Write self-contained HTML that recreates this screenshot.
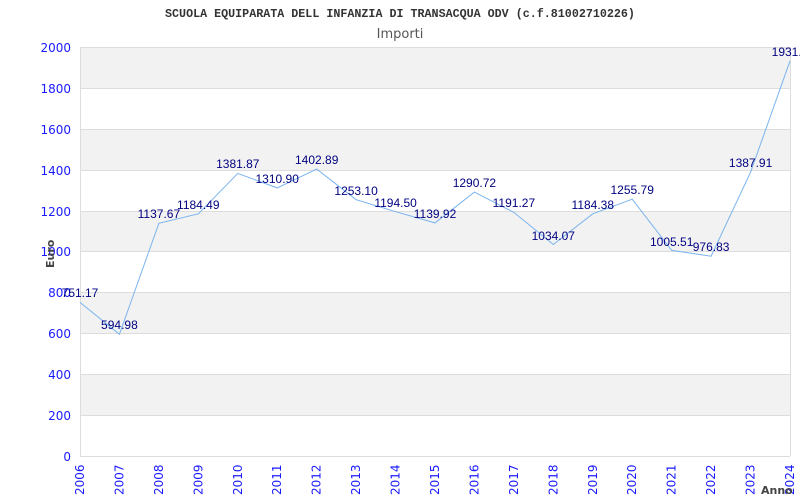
<!DOCTYPE html>
<html><head><meta charset="utf-8"><style>
html,body{margin:0;padding:0;background:#fff;width:800px;height:500px;overflow:hidden}
</style></head><body>
<svg width="800" height="500" xmlns="http://www.w3.org/2000/svg">
<text x="400" y="17" text-anchor="middle" font-family="Liberation Mono, DejaVu Sans Mono, monospace" font-weight="bold" font-size="11.7" fill="#333">SCUOLA EQUIPARATA DELL INFANZIA DI TRANSACQUA ODV (c.f.81002710226)</text>
<text x="400" y="38" text-anchor="middle" font-family="DejaVu Sans, sans-serif" font-size="13" fill="#555">Importi</text>
<g fill="#f2f2f2">
<rect x="80" y="47" width="710" height="41"/>
<rect x="80" y="129" width="710" height="41"/>
<rect x="80" y="211" width="710" height="40"/>
<rect x="80" y="292" width="710" height="41"/>
<rect x="80" y="374" width="710" height="41"/>
</g>
<g stroke="#ddd" stroke-width="1">
<line x1="80" y1="47.5" x2="790" y2="47.5"/>
<line x1="80" y1="88.5" x2="790" y2="88.5"/>
<line x1="80" y1="129.5" x2="790" y2="129.5"/>
<line x1="80" y1="170.5" x2="790" y2="170.5"/>
<line x1="80" y1="211.5" x2="790" y2="211.5"/>
<line x1="80" y1="251.5" x2="790" y2="251.5"/>
<line x1="80" y1="292.5" x2="790" y2="292.5"/>
<line x1="80" y1="333.5" x2="790" y2="333.5"/>
<line x1="80" y1="374.5" x2="790" y2="374.5"/>
<line x1="80" y1="415.5" x2="790" y2="415.5"/>
<line x1="80" y1="456.5" x2="790" y2="456.5"/>
<line x1="80.5" y1="47" x2="80.5" y2="456"/>
<line x1="790.5" y1="47" x2="790.5" y2="456"/>
</g>
<g font-family="DejaVu Sans, sans-serif" font-size="12" fill="#1a1aff" text-anchor="end">
<text x="71" y="52">2000</text><text x="71" y="93">1800</text><text x="71" y="134">1600</text>
<text x="71" y="175">1400</text><text x="71" y="216">1200</text><text x="71" y="256">1000</text>
<text x="71" y="297">800</text><text x="71" y="338">600</text><text x="71" y="379">400</text>
<text x="71" y="420">200</text><text x="71" y="461">0</text>
</g>
<g font-family="DejaVu Sans, sans-serif" font-size="12" fill="#1a1aff">
<text transform="translate(84,495) rotate(-90)">2006</text>
<text transform="translate(123.4,495) rotate(-90)">2007</text>
<text transform="translate(162.9,495) rotate(-90)">2008</text>
<text transform="translate(202.3,495) rotate(-90)">2009</text>
<text transform="translate(241.8,495) rotate(-90)">2010</text>
<text transform="translate(281.2,495) rotate(-90)">2011</text>
<text transform="translate(320.7,495) rotate(-90)">2012</text>
<text transform="translate(360.1,495) rotate(-90)">2013</text>
<text transform="translate(399.6,495) rotate(-90)">2014</text>
<text transform="translate(439,495) rotate(-90)">2015</text>
<text transform="translate(478.4,495) rotate(-90)">2016</text>
<text transform="translate(517.9,495) rotate(-90)">2017</text>
<text transform="translate(557.3,495) rotate(-90)">2018</text>
<text transform="translate(596.8,495) rotate(-90)">2019</text>
<text transform="translate(636.2,495) rotate(-90)">2020</text>
<text transform="translate(675.7,495) rotate(-90)">2021</text>
<text transform="translate(715.1,495) rotate(-90)">2022</text>
<text transform="translate(754.6,495) rotate(-90)">2023</text>
<text transform="translate(794,495) rotate(-90)">2024</text>
</g>
<text x="761" y="494" font-family="DejaVu Sans, sans-serif" font-weight="bold" font-size="11" fill="#444">Anno</text>
<text transform="translate(54,268) rotate(-90)" font-family="DejaVu Sans, sans-serif" font-weight="bold" font-size="11" fill="#444">Euro</text>
<polyline fill="none" stroke="#7ab4ee" stroke-width="1" points="80,302.4 119.4,334.3 158.9,223.3 198.3,213.8 237.8,173.4 277.2,187.9 316.7,169.1 356.1,199.7 395.6,211.7 435,222.9 474.4,192.1 513.9,212.4 553.3,244.5 592.8,213.8 632.2,199.2 671.7,250.4 711.1,256.2 750.6,172.2 790,60.9"/>
<g font-family="Liberation Sans, sans-serif" font-size="12" fill="#000080" text-anchor="middle">
<text x="80" y="297">751.17</text>
<text x="119.4" y="329">594.98</text>
<text x="158.9" y="218">1137.67</text>
<text x="198.3" y="209">1184.49</text>
<text x="237.8" y="168">1381.87</text>
<text x="277.2" y="183">1310.90</text>
<text x="316.7" y="164">1402.89</text>
<text x="356.1" y="195">1253.10</text>
<text x="395.6" y="207">1194.50</text>
<text x="435" y="218">1139.92</text>
<text x="474.4" y="187">1290.72</text>
<text x="513.9" y="207">1191.27</text>
<text x="553.3" y="240">1034.07</text>
<text x="592.8" y="209">1184.38</text>
<text x="632.2" y="194">1255.79</text>
<text x="671.7" y="246">1005.51</text>
<text x="711.1" y="251">976.83</text>
<text x="750.6" y="167">1387.91</text>
<text x="790" y="56">1931.9</text>
</g>
</svg>
</body></html>
